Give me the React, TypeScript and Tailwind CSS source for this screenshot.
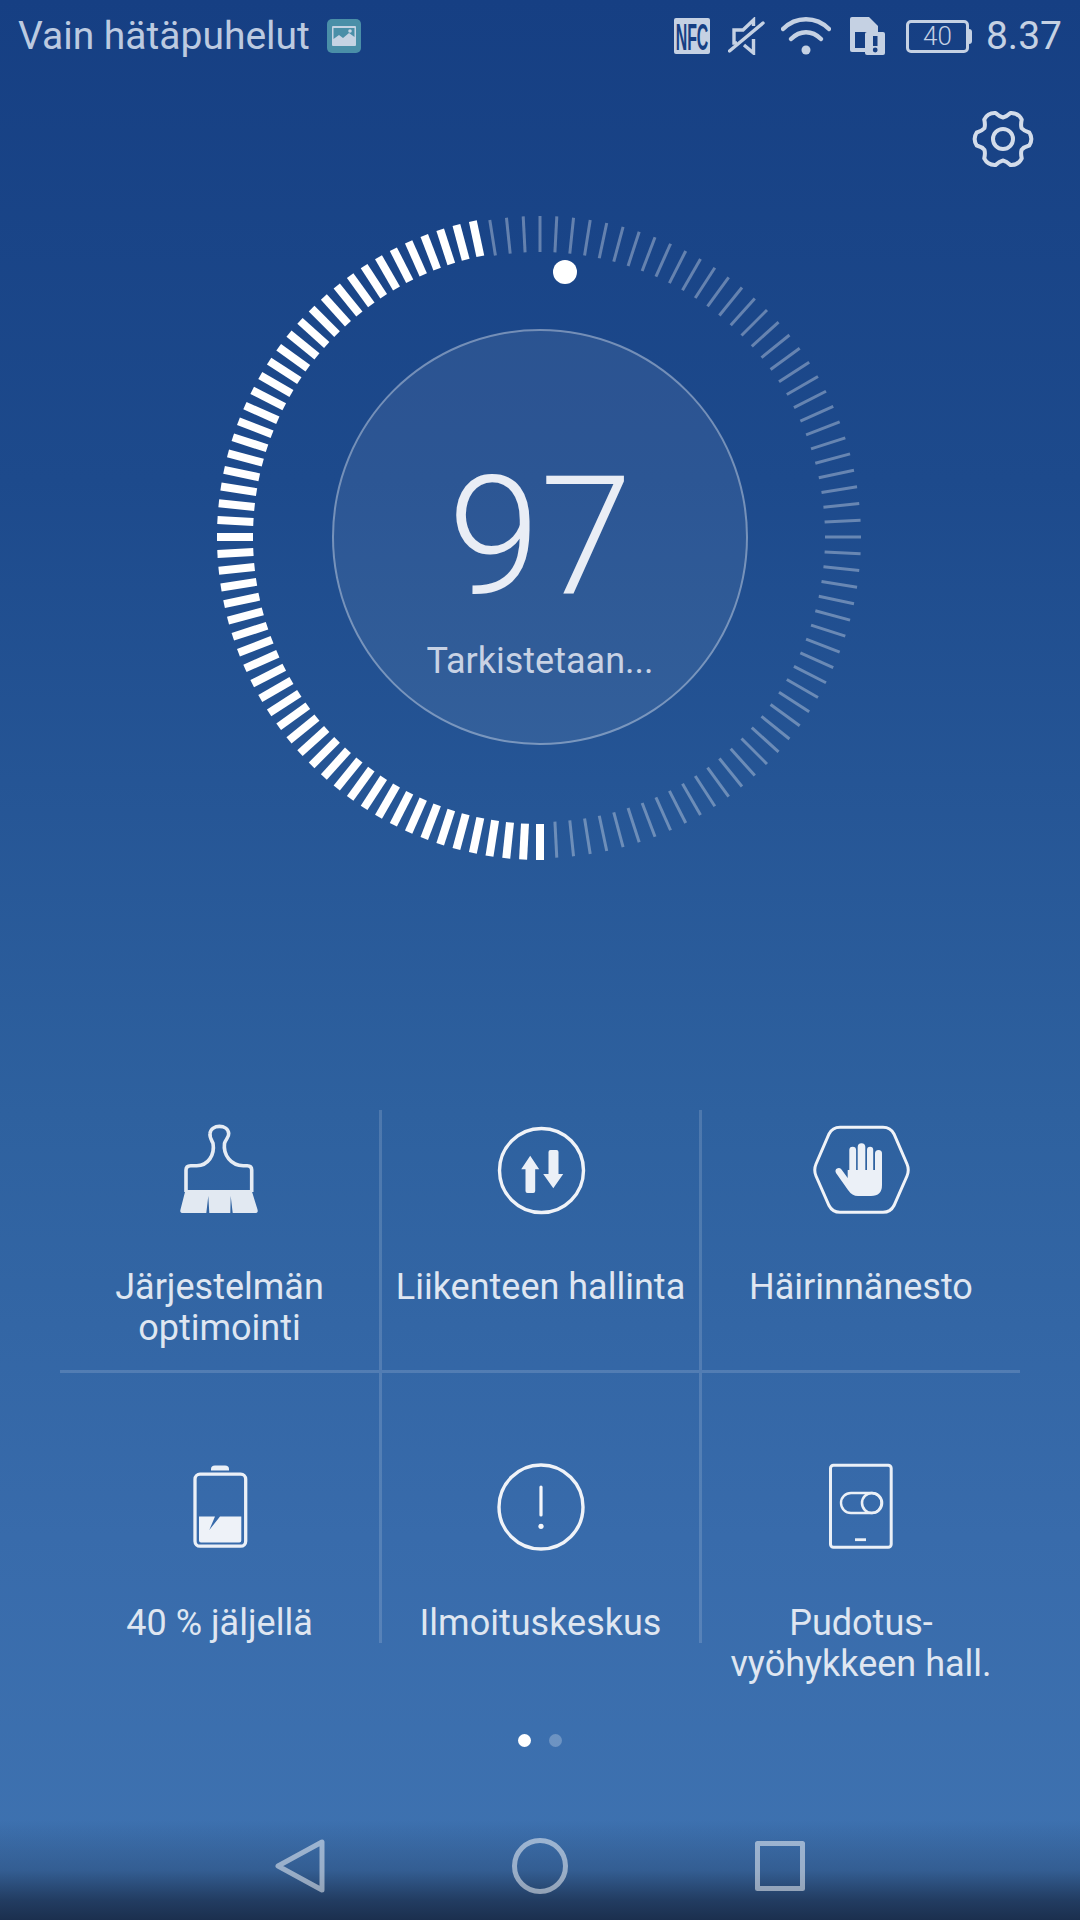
const ticks = Array.from({ length: 120 }, (_, i) => i * 3)

const polar = (deg: number, r: number) => {
  const a = (deg * Math.PI) / 180
  return `${(32 + r * Math.cos(a)).toFixed(2)} ${(32 + r * Math.sin(a)).toFixed(2)}`
}

// gear outline, six flat lobes with shallow valleys between them
const gearPath =
  `M${polar(-30, 21.5)} ` +
  [0, 60, 120, 180, 240, 300]
    .map(
      (d) =>
        `Q${polar(d - 21, 22.5)} ${polar(d - 14, 27)} ` +
        `Q${polar(d, 30.5)} ${polar(d + 14, 27)} ` +
        `Q${polar(d + 21, 22.5)} ${polar(d + 30, 21.5)}`,
    )
    .join(' ') +
  ' Z'

function Gauge() {
  return (
    <svg width="660" height="660" viewBox="-330 -330 660 660" className="[grid-area:1/1]">
      {ticks.map((deg) => {
        const on = deg >= 180 && deg <= 348
        return (
          <line
            key={deg}
            x1="0"
            x2="0"
            y1={on ? -323 : -321}
            y2={on ? -287 : -285}
            transform={`rotate(${deg})`}
            stroke={on ? '#ffffff' : 'rgba(255,255,255,0.33)'}
            strokeWidth={on ? 8 : 3}
          />
        )
      })}
      <circle cx="25" cy="-265" r="12" fill="#ffffff" />
    </svg>
  )
}

function NfcIcon() {
  return (
    <svg width="36" height="36" viewBox="0 0 36 36">
      <rect width="36" height="36" rx="2" fill="#c5d1e3" />
      <text
        transform="translate(18 31.5) scale(0.43 1)"
        textAnchor="middle"
        fontFamily="'Liberation Sans', sans-serif"
        fontWeight="700"
        fontSize="37"
        fill="#163f83"
      >
        NFC
      </text>
    </svg>
  )
}

function MuteIcon() {
  return (
    <svg width="37" height="38" viewBox="0 0 37 38" fill="none" stroke="#c5d1e3" strokeWidth="3.4">
      <path d="M9 26H6V13H15L25.5 3V9" />
      <path d="M25.5 22V36L16 28" />
      <path d="M1.5 34L35 6" strokeLinecap="round" />
    </svg>
  )
}

function WifiIcon() {
  return (
    <svg width="50" height="38" viewBox="0 0 50 38" fill="none" stroke="#c5d1e3" strokeWidth="4.5" strokeLinecap="round">
      <path d="M2 12C15 -1 35 -1 48 12" />
      <path d="M10 22C19 13 31 13 40 22" />
      <circle cx="25" cy="33" r="4.5" fill="#c5d1e3" stroke="none" />
    </svg>
  )
}

function SimIcon() {
  return (
    <svg width="35" height="38" viewBox="0 0 35 38">
      <path d="M2 0H19L28 9V35H2Q0 35 0 33V2Q0 0 2 0Z" fill="#c5d1e3" />
      <rect x="5" y="15" width="18" height="16" fill="#163f83" />
      <rect x="15" y="15" width="20" height="23" rx="2" fill="#c5d1e3" />
      <rect x="23" y="19" width="4.5" height="10" fill="#163f83" />
      <circle cx="25.2" cy="33" r="2.4" fill="#163f83" />
    </svg>
  )
}

function BatteryIcon() {
  return (
    <div className="flex items-center">
      <div className="w-[63px] h-[33px] border-[3.5px] border-[#c5d1e3] rounded-[5px] flex items-center justify-center text-[26px] leading-none font-light text-[#c5d1e3]">
        40
      </div>
      <div className="w-[3px] h-[15px] bg-[#c5d1e3] rounded-r-sm" />
    </div>
  )
}

function BrushIcon() {
  return (
    <svg width="100" height="100" viewBox="0 0 100 100" fill="none" className="shrink-0">
      <path
        d="M16 72V50Q16 45.7 20.7 45.7H26.7C38 45.7 45 35 43 23.3C41 19 39.5 17 40 13.5C41 4 58 4 58.7 13.5C59 17 56 19 54.5 23.3C53 35 61 45.7 73.3 45.7H77.3Q81.7 45.7 81.7 50V72"
        stroke="#e6ecf4"
        strokeWidth="3.6"
      />
      <path
        d="M15.5 70H81.5L87.5 89.5Q88.5 93 85 93H62.7L60.7 76L60.3 93H39.3L38.3 76L36.3 93H13Q9.5 93 10.5 89.5Z"
        fill="#e2e9f2"
      />
    </svg>
  )
}

function TrafficIcon() {
  return (
    <svg width="100" height="100" viewBox="0 0 100 100" fill="none" className="shrink-0">
      <circle cx="50.5" cy="50.5" r="42" stroke="#f0f3f8" strokeWidth="3.4" />
      <path d="M39.2 35.7L48.2 49.3H44.2V71Q44.2 73 42.2 73H36.5Q34.5 73 34.5 71V49.3H30.2Z" fill="#ebf0f7" />
      <path d="M59.5 30H65.5Q67.5 30 67.5 32V54H72.2L62.3 68.3L52.2 54H57.5V32Q57.5 30 59.5 30Z" fill="#ebf0f7" />
    </svg>
  )
}

function HandIcon() {
  return (
    <svg width="100" height="100" viewBox="0 0 100 100" fill="none" className="shrink-0">
      <path
        d="M5 44L18 14Q21.5 7.3 29 7.3H72Q79.5 7.3 83 14L96 44Q98.5 50 96 56L83 85.5Q79.5 92.3 72 92.3H29Q21.5 92.3 18 85.5L5 56Q2.5 50 5 44Z"
        stroke="#f0f3f8"
        strokeWidth="3"
      />
      <rect x="38.3" y="26.7" width="6.8" height="30" rx="3.4" fill="#ebf0f7" />
      <rect x="46.7" y="23.3" width="7.6" height="30" rx="3.8" fill="#ebf0f7" />
      <rect x="56" y="26.7" width="6.2" height="30" rx="3.1" fill="#ebf0f7" />
      <rect x="64" y="30" width="7" height="30" rx="3.5" fill="#ebf0f7" />
      <path d="M36.7 50H71V65Q71 76 60 76H47Q41 76 37 70L25 53Q23.5 50 26 48.5Q28.5 47.3 30.5 49.5L36.7 58Z" fill="#ebf0f7" />
    </svg>
  )
}

function BatteryOutlineIcon() {
  return (
    <svg width="100" height="100" viewBox="0 0 100 100" fill="none" className="shrink-0">
      <path d="M41 13.5V12Q41 8.5 45 8.5H55Q59 8.5 59 12V13.5Z" fill="#ebf0f7" />
      <rect x="25" y="17.2" width="50.7" height="72" rx="5" stroke="#ebf0f7" strokeWidth="3.3" />
      <path d="M29 59.5H45L39.3 73L50 59.5H71.3V83.5Q71.3 85.5 69.3 85.5H31Q29 85.5 29 83.5Z" fill="#eef2f8" />
    </svg>
  )
}

function AlertIcon() {
  return (
    <svg width="100" height="100" viewBox="0 0 100 100" fill="none" className="shrink-0">
      <circle cx="50" cy="50" r="42" stroke="#f0f3f8" strokeWidth="3.4" />
      <path d="M50 30V58" stroke="#f5f7fb" strokeWidth="3.2" strokeLinecap="round" />
      <circle cx="50" cy="69.3" r="2.6" fill="#f5f7fb" />
    </svg>
  )
}

function DropZoneIcon() {
  return (
    <svg width="100" height="100" viewBox="0 0 100 100" fill="none" className="shrink-0">
      <rect x="19.5" y="8.2" width="60.7" height="82" rx="3" stroke="#ebf0f7" strokeWidth="3" />
      <rect x="30" y="36" width="40.5" height="20" rx="10" stroke="#ebf0f7" strokeWidth="2.4" />
      <circle cx="61" cy="46" r="10" stroke="#ebf0f7" strokeWidth="2.6" />
      <rect x="44" y="81.3" width="11" height="2.8" fill="#ebf0f7" />
    </svg>
  )
}

const topRow = [
  { icon: <BrushIcon />, label: 'Järjestelmän optimointi' },
  { icon: <TrafficIcon />, label: 'Liikenteen hallinta' },
  { icon: <HandIcon />, label: 'Häirinnänesto' },
]

const bottomRow = [
  { icon: <BatteryOutlineIcon />, label: '40 % jäljellä' },
  { icon: <AlertIcon />, label: 'Ilmoituskeskus' },
  { icon: <DropZoneIcon />, label: 'Pudotus-\nvyöhykkeen hall.' },
]

export default function App() {
  return (
    <div className="w-[1080px] h-[1920px] flex flex-col overflow-hidden font-['Roboto',sans-serif] bg-[linear-gradient(180deg,#163f83_0%,#1d4a8c_25%,#2e619f_58%,#386bab_80%,#3f73b1_100%)]">
      <div className="h-[72px] shrink-0 flex items-center pl-[18px] pr-[18px] text-[#bccae0]">
        <span className="text-[39px] leading-none whitespace-nowrap">Vain hätäpuhelut</span>
        <div className="ml-[17px] w-[34px] h-[34px] rounded-[5px] bg-[#4a8fa8] flex items-center justify-center">
          <svg width="24" height="20" viewBox="0 0 24 20">
            <rect width="24" height="20" rx="1" fill="#c5d3e3" />
            <path d="M1.5 2H22.5V11L17 7L11 12L7 9L1.5 13Z" fill="#4a8fa8" />
            <circle cx="18" cy="5" r="1.8" fill="#c5d3e3" />
          </svg>
        </div>
        <div className="ml-auto flex items-center">
          <NfcIcon />
          <div className="ml-[18px]"><MuteIcon /></div>
          <div className="ml-[16px]"><WifiIcon /></div>
          <div className="ml-[19px]"><SimIcon /></div>
          <div className="ml-[21px]"><BatteryIcon /></div>
          <span className="ml-[14px] text-[39px] leading-none text-[#c5d1e3]">8.37</span>
        </div>
      </div>

      <div className="h-[135px] shrink-0 flex justify-end pt-[35px] pr-[45px]">
        <svg width="64" height="64" viewBox="0 0 64 64" fill="none" stroke="#d3dcea" strokeWidth="4" strokeLinejoin="round">
          <path d={gearPath} />
          <circle cx="32" cy="32" r="10" />
        </svg>
      </div>

      <div className="grid place-items-center w-[660px] h-[660px] mx-auto shrink-0">
        <Gauge />
        <div className="[grid-area:1/1] w-[416px] h-[416px] rounded-full border-2 border-white/35 bg-white/[0.07] flex flex-col items-center">
          <span className="mt-[123px] text-[166px] leading-[166px] font-light text-[#e9edf5]">97</span>
          <span className="mt-[21px] text-[36px] leading-[40px] text-[#c8d2e4]">Tarkistetaan...</span>
        </div>
      </div>

      <div className="mt-[243px] w-[960px] mx-auto shrink-0 text-[#dfe6f1] text-[36px] leading-[41px] text-center">
        <div className="h-[263px] grid grid-cols-[322px_320px_318px] border-b-[3px] border-white/15">
          {topRow.map((cell, i) => (
            <div key={cell.label} className={i < 2 ? 'pt-[10px] flex flex-col items-center border-r-[3px] border-white/15' : 'pt-[10px] flex flex-col items-center'}>
              {cell.icon}
              <div className="mt-[47px] px-[8px]">{cell.label}</div>
            </div>
          ))}
        </div>
        <div className="h-[270px] grid grid-cols-[322px_320px_318px] grid-rows-[270px]">
          {bottomRow.map((cell, i) => (
            <div key={cell.label} className={i < 2 ? 'pt-[84px] flex flex-col items-center border-r-[3px] border-white/15' : 'pt-[84px] flex flex-col items-center'}>
              {cell.icon}
              <div className="mt-[46px] shrink-0 whitespace-pre-line">{cell.label}</div>
            </div>
          ))}
        </div>
      </div>

      <div className="mt-[91px] flex justify-center gap-[18px] shrink-0">
        <div className="w-[13px] h-[13px] rounded-full bg-white" />
        <div className="w-[13px] h-[13px] rounded-full bg-white/25" />
      </div>

      <div className="mt-auto h-[100px] shrink-0 flex justify-center gap-[160px] pt-[6px] bg-[linear-gradient(180deg,rgba(27,47,78,0)_0%,rgba(27,47,78,0.3)_50%,rgba(27,47,78,0.8)_80%,#1b2f4e_100%)]">
        <svg width="80" height="80" viewBox="0 0 80 80" fill="none" stroke="#ffffff" strokeOpacity="0.5" strokeWidth="5" strokeLinejoin="round">
          <path d="M62 16V64L18 40Z" />
        </svg>
        <svg width="80" height="80" viewBox="0 0 80 80" fill="none" stroke="#ffffff" strokeOpacity="0.5" strokeWidth="5">
          <circle cx="40" cy="40" r="25.5" />
        </svg>
        <svg width="80" height="80" viewBox="0 0 80 80" fill="none" stroke="#ffffff" strokeOpacity="0.5" strokeWidth="5" strokeLinejoin="round">
          <rect x="17.5" y="17.5" width="45" height="45" />
        </svg>
      </div>
    </div>
  )
}
